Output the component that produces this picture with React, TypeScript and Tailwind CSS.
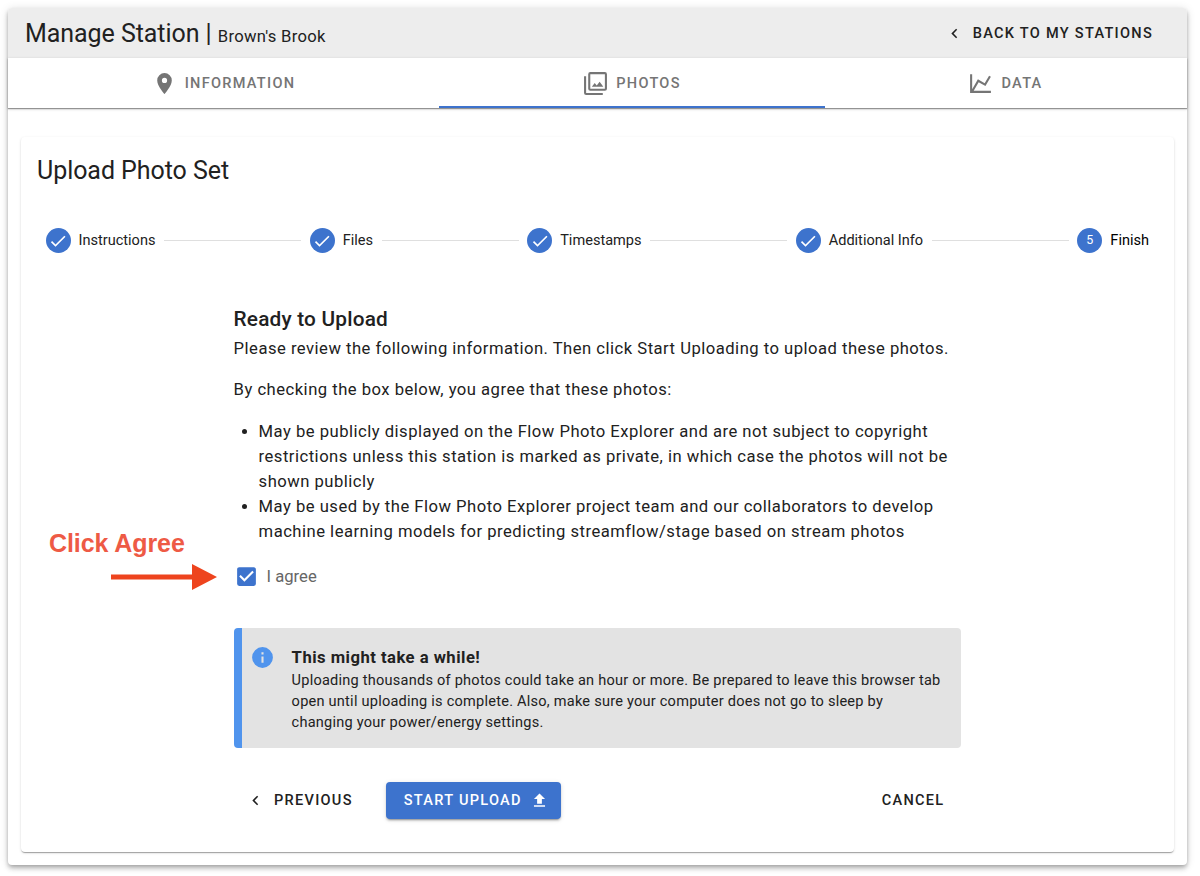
import React from "react";

const ICONS = {
  marker:
    "M12,11.5A2.5,2.5 0 0,1 9.5,9A2.5,2.5 0 0,1 12,6.5A2.5,2.5 0 0,1 14.5,9A2.5,2.5 0 0,1 12,11.5M12,2A7,7 0 0,0 5,9C5,14.25 12,22 12,22C12,22 19,14.25 19,9A7,7 0 0,0 12,2Z",
  images:
    "M21,17H7V3H21M21,1H7A2,2 0 0,0 5,3V17A2,2 0 0,0 7,19H21A2,2 0 0,0 23,17V3A2,2 0 0,0 21,1M3,5H1V21A2,2 0 0,0 3,23H19V21H3M15.96,10.29L13.21,13.83L11.25,11.47L8.5,15H19.5L15.96,10.29Z",
  chart:
    "M16,11.78L20.24,4.45L21.97,5.45L16.74,14.5L10.23,10.75L5.46,19H22V21H2V3H4V17.54L9.5,8L16,11.78Z",
  chevron: "M15.41,16.58L10.83,12L15.41,7.41L14,6L8,12L14,18L15.41,16.58Z",
  check: "M21,7L9,19L3.5,13.5L4.91,12.09L9,16.17L19.59,5.59L21,7Z",
  checkbox:
    "M10,17L5,12L6.41,10.58L10,14.17L17.59,6.58L19,8M19,3H5C3.89,3 3,3.89 3,5V19A2,2 0 0,0 5,21H19A2,2 0 0,0 21,19V5C21,3.89 20.1,3 19,3Z",
  info: "M13,9H11V7H13M13,17H11V11H13M12,2A10,10 0 0,0 2,12A10,10 0 0,0 12,22A10,10 0 0,0 22,12A10,10 0 0,0 12,2Z",
  upload: "M9,16V10H5L12,3L19,10H15V16H9M5,20V18H19V20H5Z",
};

function Icon({ name, className }: { name: keyof typeof ICONS; className: string }) {
  return (
    <svg viewBox="0 0 24 24" fill="currentColor" className={`shrink-0 ${className}`}>
      <path d={ICONS[name]} />
    </svg>
  );
}

function StepLine() {
  return <div className="mx-[8.5px] h-px flex-1 bg-[#dfdfdf]" />;
}

function Step({ label, number }: { label: string; number?: number }) {
  return (
    <div className="flex items-center">
      <div className="mr-[8px] flex size-[25px] items-center justify-center rounded-full bg-[#3d73cd] text-[12.5px] text-white">
        {number ?? <Icon name="check" className="size-[20px]" />}
      </div>
      <span className={number ? "text-[14.56px] leading-none text-black" : "text-[14.56px] leading-none"}>{label}</span>
    </div>
  );
}

export default function App() {
  return (
    <div className="h-[876px] overflow-hidden bg-white pt-[8px] pl-[8px] font-['Roboto',sans-serif] text-[#212121]">
      <main className="flex h-[856.5px] w-[1179px] flex-col rounded-[4px] bg-white shadow-[0_2px_4px_-1px_rgba(0,0,0,0.25),0_4px_5px_rgba(0,0,0,0.14),0_1px_10px_rgba(0,0,0,0.12)]">
        <header className="flex h-[50px] shrink-0 items-center justify-between rounded-t-[4px] bg-[#ededed] pr-[34px] pl-[17px]">
          <h1 className="pt-[3px] text-[25px] leading-[33px] tracking-[-0.06px]">
            Manage Station | <span className="text-[16.64px] tracking-[0.27px]">Brown&apos;s Brook</span>
          </h1>
          <button className="flex items-center text-[14.56px] font-medium tracking-[1.28px]">
            <Icon name="chevron" className="mr-[9px] size-[19px]" />
            <span className="pt-[2px]">BACK TO MY STATIONS</span>
          </button>
        </header>

        <nav className="flex h-[50px] shrink-0 text-[14.56px] font-medium tracking-[1.28px] text-[#757575] shadow-[0_1px_1px_rgba(0,0,0,0.34),0_1px_3px_rgba(0,0,0,0.2)]">
          <div className="flex w-[431px] items-center justify-center">
            <Icon name="marker" className="mr-[8px] size-[25px]" />
            <span className="pt-[2px]">INFORMATION</span>
          </div>
          <div className="flex w-[386px] items-center justify-center border-b-2 border-[#3d73cd] pt-[2px]">
            <Icon name="images" className="mr-[8px] size-[25px]" />
            <span className="pt-[2px]">PHOTOS</span>
          </div>
          <div className="flex flex-1 items-center justify-center pr-[1px]">
            <Icon name="chart" className="mr-[8px] size-[25px]" />
            <span className="pt-[2px]">DATA</span>
          </div>
        </nav>

        <section className="mt-[29px] ml-[13px] flex h-[715px] w-[1153px] flex-col rounded-[4px] bg-white shadow-[0_2px_1px_-1px_rgba(0,0,0,0.2),0_1px_1px_rgba(0,0,0,0.14),0_1px_3px_rgba(0,0,0,0.12)]">
          <h2 className="mt-[17px] ml-[16px] text-[25px] leading-[33px] tracking-[-0.06px]">Upload Photo Set</h2>

          <div className="mt-[41px] flex h-[25px] items-center pr-[25px] pl-[24.5px]">
            <Step label="Instructions" />
            <StepLine />
            <Step label="Files" />
            <StepLine />
            <Step label="Timestamps" />
            <StepLine />
            <Step label="Additional Info" />
            <StepLine />
            <Step label="Finish" number={5} />
          </div>

          <div className="mt-[50px] ml-[212.6px] w-[727.4px]">
            <h3 className="text-[20.8px] leading-[33px] font-medium tracking-[0.19px]">Ready to Upload</h3>
            <div className="text-[16.64px] leading-[25px] tracking-[0.485px]">
              <p className="whitespace-nowrap">
                Please review the following information. Then click Start Uploading to upload these photos.
              </p>
              <p className="mt-[16.2px]">By checking the box below, you agree that these photos:</p>
              <ul className="mt-[16.5px] list-disc pl-[25px]">
                <li>
                  May be publicly displayed on the Flow Photo Explorer and are not subject to copyright
                  <br />
                  restrictions unless this station is marked as private, in which case the photos will not be
                  <br />
                  shown publicly
                </li>
                <li>
                  May be used by the Flow Photo Explorer project team and our collaborators to develop
                  <br />
                  machine learning models for predicting streamflow/stage based on stream photos
                </li>
              </ul>
            </div>

            <div className="relative mt-[20.3px] flex h-[25px] items-center text-[16.64px] text-[#666666]">
              <Icon name="checkbox" className="mr-[8px] size-[25px] text-[#3d73cd]" />
              <span className="pt-[2px]">I agree</span>
              <div className="absolute top-[-39px] left-[-184.6px] font-['Liberation_Sans',sans-serif] text-[25px] leading-[36px] font-bold tracking-[-0.08px] whitespace-nowrap text-[#ee5a45]">
                Click Agree
              </div>
              <svg viewBox="0 0 106 26" className="absolute top-0 left-[-122.6px] h-[26px] w-[106px]" fill="#ee441e">
                <path d="M0 10.5H81V0L106 13L81 26V15.5H0Z" />
              </svg>
            </div>

            <aside className="mt-[39px] flex h-[120px] rounded-[4px] border-l-8 border-[#5094ed] bg-[#e3e3e3] pt-[17px] pl-[8px]">
              <Icon name="info" className="mr-[17px] size-[25px] text-[#5094ed]" />
              <div>
                <div className="text-[16.64px] leading-[25px] font-bold tracking-[0.48px]">This might take a while!</div>
                <p className="text-[14.56px] leading-[20.8px] tracking-[0.235px] whitespace-nowrap">
                  Uploading thousands of photos could take an hour or more. Be prepared to leave this browser tab
                  <br />
                  open until uploading is complete. Also, make sure your computer does not go to sleep by
                  <br />
                  changing your power/energy settings.
                </p>
              </div>
            </aside>

            <div className="mt-[34px] flex h-[37px] items-center text-[14.56px] font-medium tracking-[1.28px]">
              <button className="ml-[12.4px] flex items-center">
                <Icon name="chevron" className="mr-[9px] size-[19px]" />
                <span className="pt-px">PREVIOUS</span>
              </button>
              <button className="ml-[33px] flex h-[37px] w-[175px] items-center rounded-[4px] bg-[#3d73cd] pl-[18px] text-white shadow-[0_3px_1px_-2px_rgba(0,0,0,0.2),0_2px_2px_rgba(0,0,0,0.14),0_1px_5px_rgba(0,0,0,0.12)]">
                <span className="pt-px">START UPLOAD</span>
                <Icon name="upload" className="ml-[8px] size-[19px]" />
              </button>
              <button className="mr-[16.5px] ml-auto pt-px">CANCEL</button>
            </div>
          </div>
        </section>
      </main>
    </div>
  );
}
